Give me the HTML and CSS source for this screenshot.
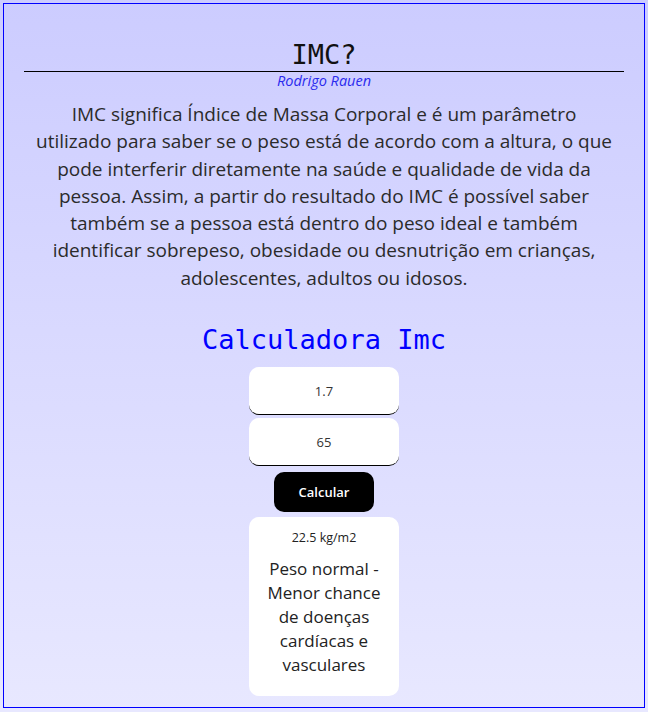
FILE: index.html
```
<!DOCTYPE html>
<html lang="pt-BR">
<head>
<meta charset="utf-8">
<title>IMC?</title>
<link rel="stylesheet" href="styles.css">
</head>
<body>
<main class="page">
  <header class="header">
    <h1 class="title">IMC?</h1>
    <p class="author">Rodrigo Rauen</p>
  </header>
  <p class="intro">IMC significa Índice de Massa Corporal e é um parâmetro<br>
  utilizado para saber se o peso está de acordo com a altura, o que<br>
  pode interferir diretamente na saúde e qualidade de vida da<br>
  pessoa. Assim, a partir do resultado do IMC é possível saber<br>
  também se a pessoa está dentro do peso ideal e também<br>
  identificar sobrepeso, obesidade ou desnutrição em crianças,<br>
  adolescentes, adultos ou idosos.</p>
  <section class="calc">
    <h2 class="calc-title">Calculadora Imc</h2>
    <input class="field" type="text" value="1.7">
    <input class="field" type="text" value="65">
    <button class="btn" type="button">Calcular</button>
    <div class="result">
      <p class="result-value">22.5 kg/m2</p>
      <p class="result-text">Peso normal - Menor chance de doenças cardíacas e vasculares</p>
    </div>
  </section>
</main>
</body>
</html>
```
FILE: styles.css
```
html {
  min-height: 100%;
  background: linear-gradient(180deg, #ccccff 0%, #e8e8ff 100%);
}
body {
  margin: 0;
  min-height: 712px;
  font-family: "Open Sans", "Noto Sans", sans-serif;
  color: #222;
}
.page {
  margin: 3px;
  border: 1px solid #0000ff;
  padding: 35px 20px 11px;
  display: flex;
  flex-direction: column;
  align-items: stretch;
}
.header {
  display: flex;
  flex-direction: column;
}
.title {
  margin: 0;
  font-family: "DejaVu Sans Mono", monospace;
  font-weight: normal;
  font-size: 27px;
  line-height: 32px;
  text-align: center;
  color: #111;
  border-bottom: 1px solid #000;
}
.author {
  margin: 0;
  font-style: italic;
  font-size: 14.5px;
  line-height: 18px;
  text-align: center;
  color: #2a2aee;
}
.intro {
  margin: 11px -10px 0;
  font-size: 19px;
  line-height: 27.3px;
  text-align: center;
  color: #2b2b2b;
  white-space: nowrap;
}
.calc {
  display: flex;
  flex-direction: column;
  align-items: center;
}
.calc-title {
  margin: 31px 0 0;
  font-family: "DejaVu Sans Mono", monospace;
  font-weight: normal;
  font-size: 27px;
  line-height: 34px;
  color: #0000ff;
}
.field {
  box-sizing: border-box;
  width: 150px;
  height: 48px;
  margin-top: 3px;
  border: none;
  border-bottom: 1px solid #000;
  border-radius: 10px;
  background: #fff;
  text-align: center;
  font-family: inherit;
  font-size: 13px;
  color: #333;
  outline: none;
}
.field:first-of-type {
  margin-top: 10px;
}
.btn {
  width: 100px;
  height: 40px;
  margin-top: 6px;
  border: none;
  border-radius: 10px;
  background: #000;
  color: #fff;
  font-family: inherit;
  font-size: 13px;
  font-weight: 600;
}
.result {
  box-sizing: border-box;
  width: 150px;
  margin-top: 5px;
  padding: 11px 10px 19px;
  background: #fff;
  border-radius: 10px;
  text-align: center;
}
.result-value {
  margin: 0;
  font-size: 12.5px;
  line-height: 20px;
  color: #222;
}
.result-text {
  margin: 9px 0 0;
  font-size: 17px;
  line-height: 24px;
  color: #222;
}
```
